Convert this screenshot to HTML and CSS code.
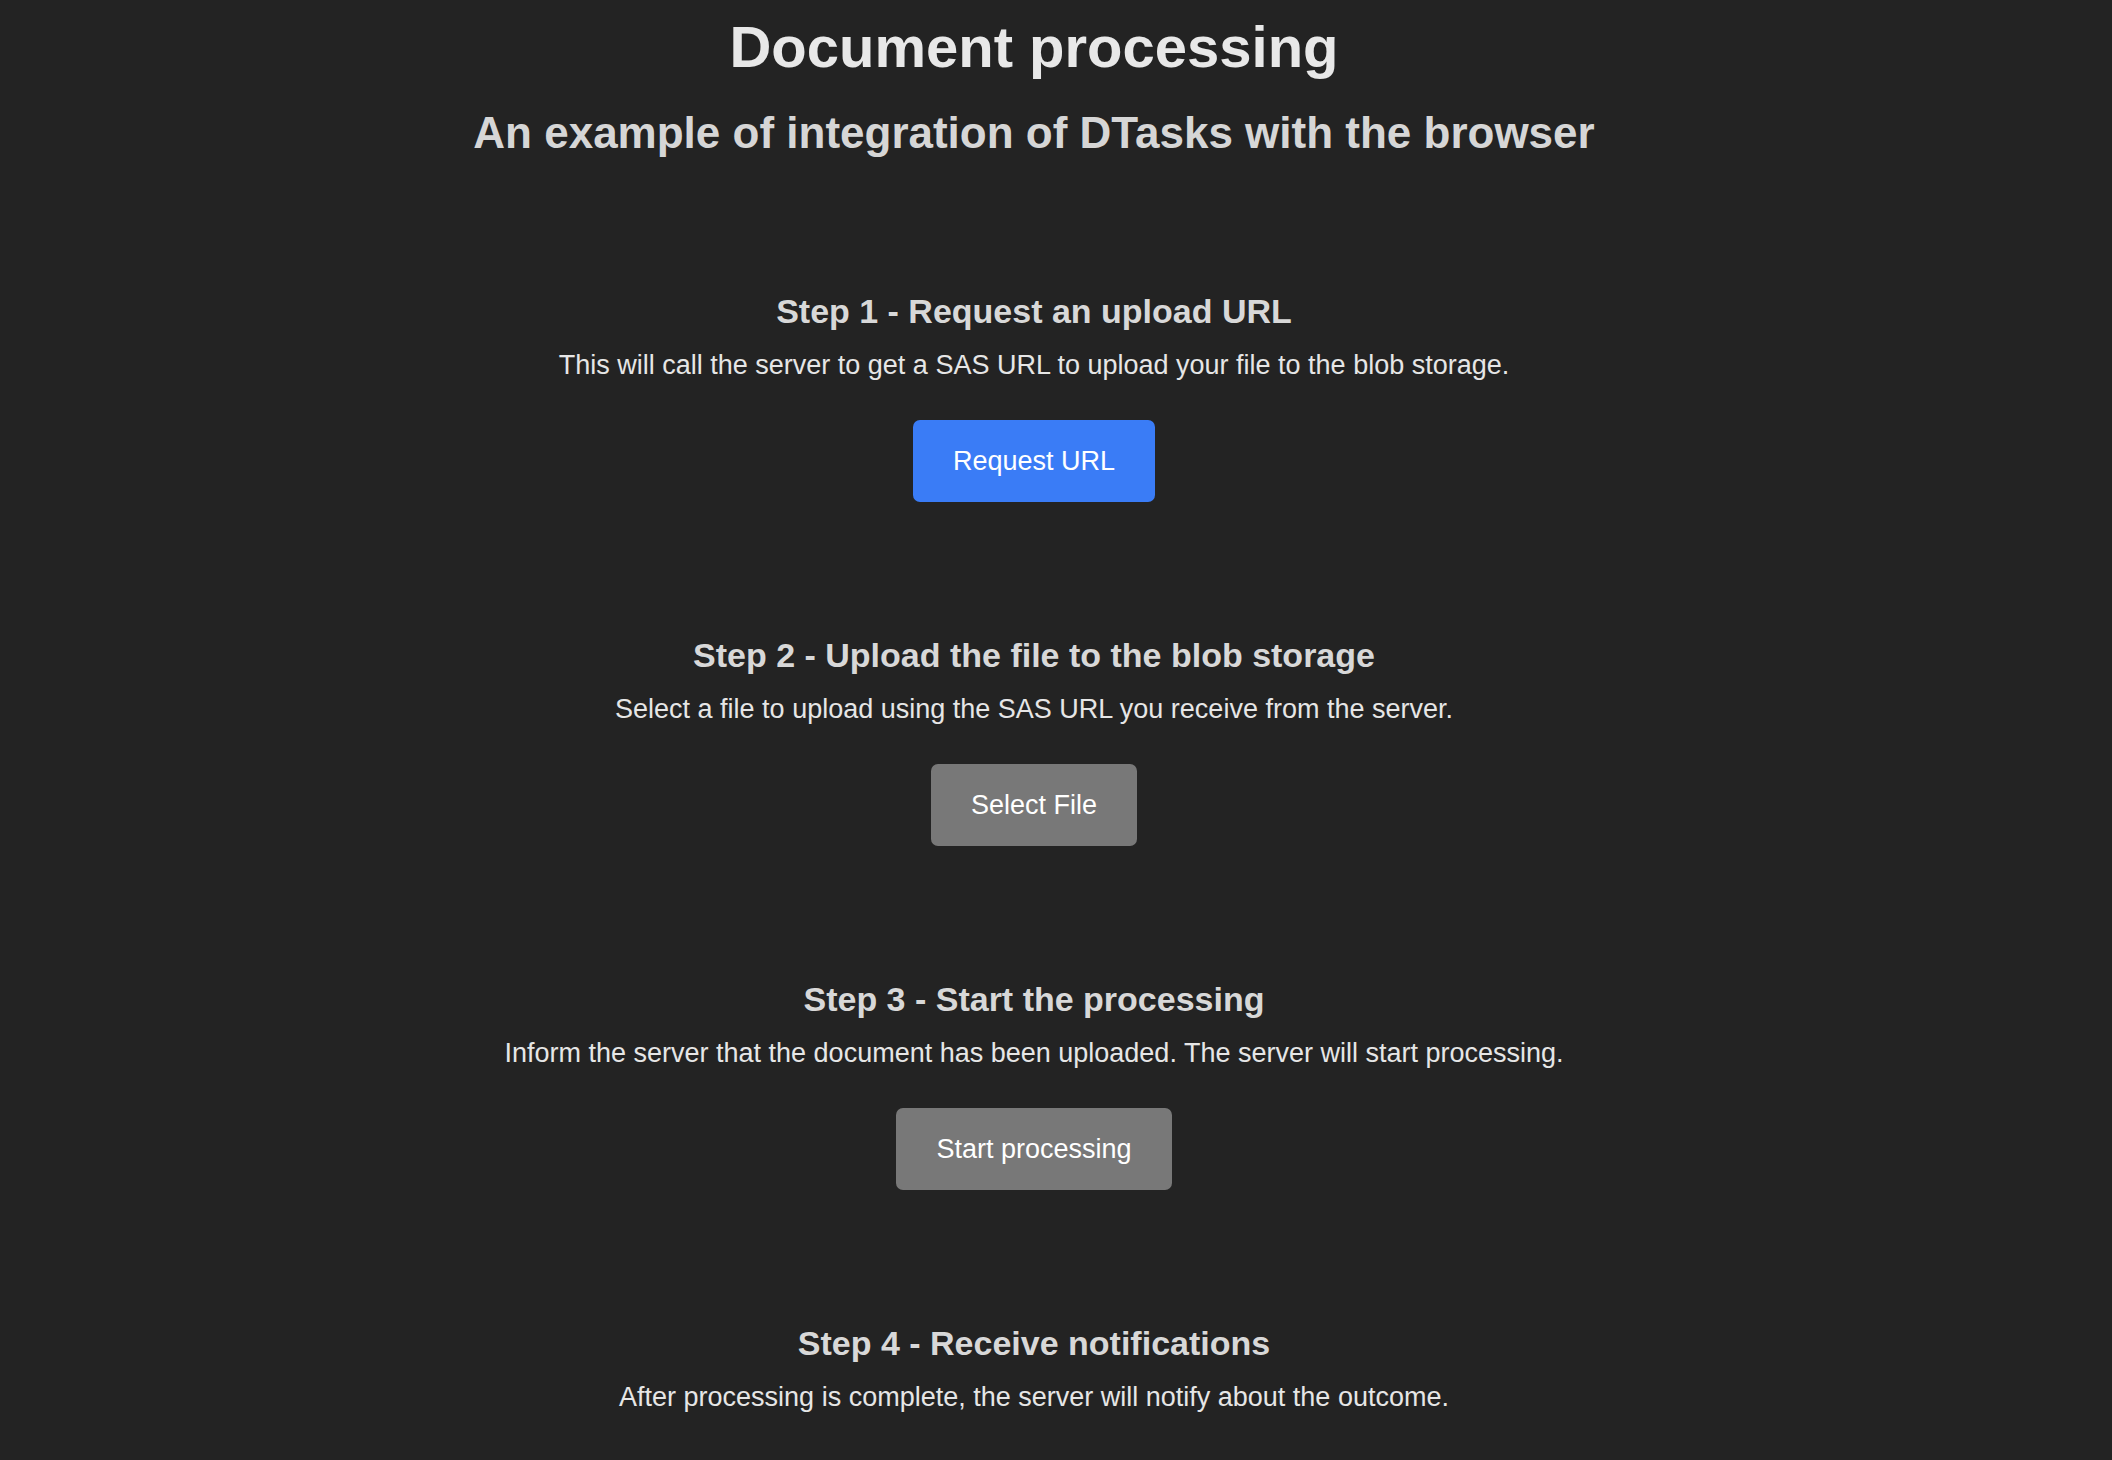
FILE: index.html
```html
<!DOCTYPE html>
<html lang="en">
<head>
<meta charset="utf-8">
<title>Document processing</title>
<link rel="stylesheet" href="styles.css">
</head>
<body>
<main class="page">
  <header class="intro">
    <h1 class="title">Document processing</h1>
    <h2 class="subtitle">An example of integration of DTasks with the browser</h2>
  </header>
  <section class="step">
    <h3 class="step-title">Step 1 - Request an upload URL</h3>
    <p class="step-text">This will call the server to get a SAS URL to upload your file to the blob storage.</p>
    <button class="btn btn-primary" type="button">Request URL</button>
  </section>
  <section class="step">
    <h3 class="step-title">Step 2 - Upload the file to the blob storage</h3>
    <p class="step-text">Select a file to upload using the SAS URL you receive from the server.</p>
    <button class="btn btn-muted" type="button">Select File</button>
  </section>
  <section class="step">
    <h3 class="step-title">Step 3 - Start the processing</h3>
    <p class="step-text">Inform the server that the document has been uploaded. The server will start processing.</p>
    <button class="btn btn-muted" type="button">Start processing</button>
  </section>
  <section class="step">
    <h3 class="step-title">Step 4 - Receive notifications</h3>
    <p class="step-text">After processing is complete, the server will notify about the outcome.</p>
  </section>
</main>
</body>
</html>
```
FILE: styles.css
```css
html, body {
  margin: 0;
  padding: 0;
  background: #232323;
}

body {
  font-family: "Liberation Sans", Arial, Helvetica, sans-serif;
  color: #e6e6e6;
  height: 1460px;
  overflow: hidden;
}

.page {
  display: flex;
  flex-direction: column;
  align-items: center;
  text-align: center;
  padding-top: 12px;
  padding-right: 44px;
}

.intro {
  display: flex;
  flex-direction: column;
  align-items: center;
}

.title {
  margin: 0;
  font-size: 58px;
  line-height: 70px;
  font-weight: 700;
  color: #e8e8e8;
}

.subtitle {
  margin: 24px 0 0;
  font-size: 44px;
  line-height: 54px;
  font-weight: 700;
  color: #d6d6d6;
}

.step {
  display: flex;
  flex-direction: column;
  align-items: center;
  margin-top: 132px;
}

.intro + .step {
  margin-top: 130px;
}

.step-title {
  margin: 0;
  font-size: 34px;
  line-height: 42px;
  font-weight: 700;
  color: #d8d8d8;
}

.step-text {
  margin: 17px 0 0;
  font-size: 27px;
  line-height: 32px;
  color: #e6e6e6;
}

.btn {
  margin-top: 39px;
  padding: 25px 40px;
  font-family: "Liberation Sans", Arial, Helvetica, sans-serif;
  font-size: 27px;
  line-height: 32px;
  color: #ffffff;
  border: none;
  border-radius: 7px;
  cursor: pointer;
}

.btn-primary {
  background: #3a7cf6;
}

.btn-muted {
  background: #787878;
}
```
